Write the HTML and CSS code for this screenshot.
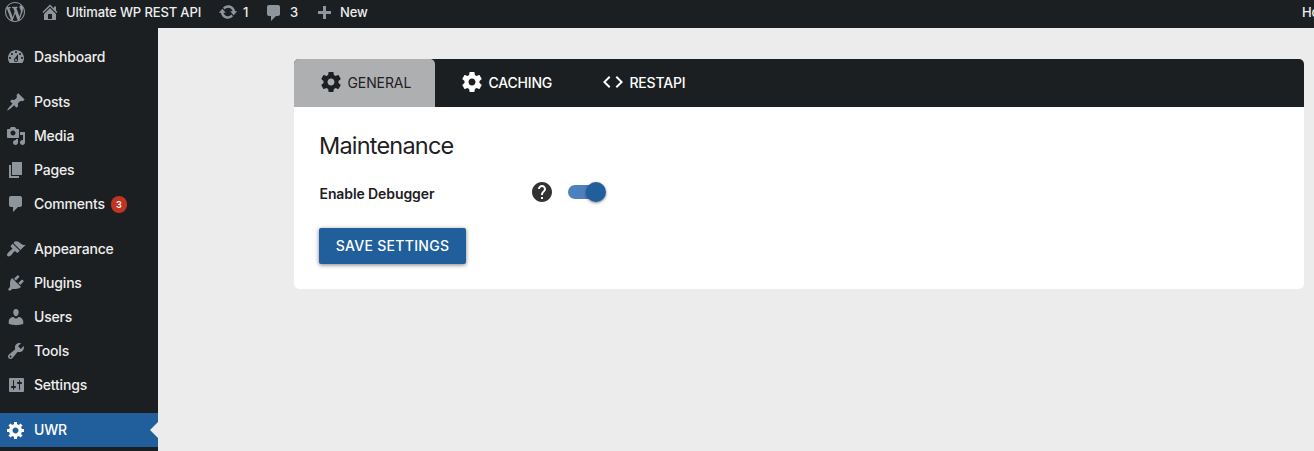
FILE: index.html
```html
<!DOCTYPE html>
<html lang="en">
<head>
<meta charset="utf-8">
<title>Ultimate WP REST API</title>
<link rel="stylesheet" href="styles.css">
</head>
<body>
<header class="adminbar">
  <svg class="icon logo" viewBox="0 0 20 20"><path d="M20 10c0-5.51-4.49-10-10-10C4.48 0 0 4.49 0 10c0 5.52 4.48 10 10 10 5.51 0 10-4.48 10-10zM7.78 15.37L4.37 6.22c.55-.02 1.17-.08 1.17-.08.5-.06.44-1.13-.06-1.11 0 0-1.45.11-2.37.11-.18 0-.37 0-.58-.01C4.12 2.69 6.87 1.11 10 1.11c2.33 0 4.45.87 6.05 2.34-.68-.11-1.65.39-1.65 1.58 0 .74.45 1.36.9 2.1.35.61.55 1.36.55 2.46 0 1.49-1.4 5-1.4 5l-3.03-8.37c.54-.02.82-.17.82-.17.5-.05.44-1.25-.06-1.22 0 0-1.44.12-2.38.12-.87 0-2.33-.12-2.33-.12-.5-.03-.56 1.2-.06 1.22l.92.08 1.26 3.41zM17.41 10c.24-.64.74-1.87.43-4.25.7 1.29 1.05 2.71 1.05 4.25 0 3.29-1.73 6.24-4.4 7.78.97-2.59 1.94-5.2 2.92-7.78zM6.1 18.09C3.12 16.65 1.11 13.53 1.11 10c0-1.3.23-2.48.72-3.59C3.25 10.3 4.67 14.2 6.1 18.09zm4.03-6.63l2.58 6.98c-.86.29-1.76.45-2.71.45-.79 0-1.57-.11-2.29-.33.81-2.38 1.62-4.74 2.42-7.1z"/></svg>
  <div class="bar-item site"><svg class="icon" viewBox="0 0 20 20"><path d="M16 8.5l1.53 1.53-1.06 1.06L10 4.6l-6.47 6.49-1.06-1.06L10 2.5l4 4v-2h2v4zm-6-2.46l6 5.99V18H4v-5.97zM12 17v-5H8v5h4z"/></svg><span>Ultimate WP REST API</span></div>
  <div class="bar-item updates"><svg class="icon" viewBox="0 0 20 20"><path d="M10.2 3.28c3.53 0 6.43 2.61 6.92 6h2.08l-3.5 4-3.5-4h2.32c-.45-1.97-2.21-3.45-4.32-3.45-1.45 0-2.73.71-3.54 1.78L4.95 5.66C6.23 4.2 8.11 3.28 10.2 3.28zm-.4 13.44c-3.52 0-6.43-2.61-6.92-6H.8l3.5-4c1.17 1.33 2.33 2.67 3.5 4H5.48c.45 1.97 2.21 3.45 4.32 3.45 1.45 0 2.73-.71 3.54-1.78l1.71 1.95c-1.28 1.46-3.15 2.38-5.25 2.38z"/></svg><span>1</span></div>
  <div class="bar-item replies"><svg class="icon" viewBox="0 0 20 20"><path d="M5 2h9c1.1 0 2 .9 2 2v7c0 1.1-.9 2-2 2h-2l-5 5v-5H5c-1.1 0-2-.9-2-2V4c0-1.1.9-2 2-2z"/></svg><span>3</span></div>
  <div class="bar-item new"><svg class="icon" viewBox="0 0 20 20"><path d="M17 7v3h-5v5H9v-5H4V7h5V2h3v5h5z"/></svg><span>New</span></div>
  <div class="howdy">Howdy</div>
</header>
<div class="layout">
  <nav class="menu">
    <a class="menu-item"><svg class="icon" viewBox="0 0 20 20"><path d="M3.76 16h12.48c1.1-1.37 1.76-3.11 1.76-5 0-4.42-3.58-8-8-8s-8 3.58-8 8c0 1.89.66 3.63 1.76 5zM10 4c.55 0 1 .45 1 1s-.45 1-1 1-1-.45-1-1 .45-1 1-1zM6 6c.55 0 1 .45 1 1s-.45 1-1 1-1-.45-1-1 .45-1 1-1zm8 0c.55 0 1 .45 1 1s-.45 1-1 1-1-.45-1-1 .45-1 1-1zm-5.37 5.55L12 7v6c0 1.1-.9 2-2 2s-2-.9-2-2c0-.57.24-1.08.63-1.45zM4 10c.55 0 1 .45 1 1s-.45 1-1 1-1-.45-1-1 .45-1 1-1zm12 0c.55 0 1 .45 1 1s-.45 1-1 1-1-.45-1-1 .45-1 1-1zm-5 3c0-.55-.45-1-1-1s-1 .45-1 1 .45 1 1 1 1-.45 1-1z"/></svg><span>Dashboard</span></a>
    <a class="menu-item group"><svg class="icon" viewBox="0 0 20 20"><path d="M10.44 3.02l1.82-1.82 6.36 6.35-1.83 1.82c-1.05-.68-2.48-.57-3.41.36l-.75.75c-.92.93-1.04 2.35-.35 3.41l-1.83 1.82-2.41-2.41-2.8 2.79c-.42.42-3.38 2.71-3.8 2.29s1.86-3.39 2.28-3.81l2.79-2.79L4.1 9.36l1.83-1.82c1.05.69 2.48.57 3.4-.36l.75-.75c.93-.92 1.05-2.35.36-3.41z"/></svg><span>Posts</span></a>
    <a class="menu-item"><svg class="icon" viewBox="0 0 20 20"><path d="M13 11V4c0-.55-.45-1-1-1h-1.67L9 1H5L3.67 3H2c-.55 0-1 .45-1 1v7c0 .55.45 1 1 1h10c.55 0 1-.45 1-1zM7 4.5c1.38 0 2.5 1.12 2.5 2.5S8.38 9.5 7 9.5 4.5 8.38 4.5 7 5.62 4.5 7 4.5zM14 6h5v10.5c0 1.38-1.12 2.5-2.5 2.5S14 17.88 14 16.5s1.12-2.5 2.5-2.5c.17 0 .34.02.5.05V9h-3V6zm-4 8.05V13h2v3.5c0 1.38-1.12 2.5-2.5 2.5S7 17.88 7 16.5 8.12 14 9.5 14c.17 0 .34.02.5.05z"/></svg><span>Media</span></a>
    <a class="menu-item"><svg class="icon" viewBox="0 0 20 20"><path d="M6 15V2h10v13H6zm-1 1h8v2H3V5h2v11z"/></svg><span>Pages</span></a>
    <a class="menu-item"><svg class="icon" viewBox="0 0 20 20"><path d="M5 2h9c1.1 0 2 .9 2 2v7c0 1.1-.9 2-2 2h-2l-5 5v-5H5c-1.1 0-2-.9-2-2V4c0-1.1.9-2 2-2z"/></svg><span>Comments</span><b class="badge">3</b></a>
    <a class="menu-item group"><svg class="icon" viewBox="0 0 20 20"><path d="M14.48 11.06L7.41 3.99l1.5-1.5c.5-.56 2.3-.47 3.51.32 1.21.8 1.43 1.28 2.91 2.1 1.18.64 2.45 1.26 4.45.85zm-.71.71L6.7 4.7 4.93 6.47c-.39.39-.39 1.02 0 1.41l1.06 1.06c.39.39.39 1.03 0 1.42-.6.6-1.43 1.11-2.21 1.69-.35.26-.7.53-1.01.84C1.43 14.23.4 16.08 1.4 17.07c.99 1 2.84-.03 4.18-1.36.31-.31.58-.66.85-1.02.57-.78 1.08-1.61 1.69-2.21.39-.39 1.02-.39 1.41 0l1.06 1.06c.39.39 1.02.39 1.41 0z"/></svg><span>Appearance</span></a>
    <a class="menu-item"><svg class="icon" viewBox="0 0 20 20"><path d="M13.11 4.36L9.87 7.6 8 5.73l3.24-3.24c.35-.34 1.05-.2 1.56.32.52.51.66 1.21.31 1.55zm-8 1.77l.91-1.12 9.01 9.01-1.19.84c-.71.71-2.63 1.16-3.82 1.16H6.14L4.9 17.26c-.59.59-1.54.59-2.12 0-.59-.58-.59-1.53 0-2.12l1.24-1.24v-3.88c0-1.13.4-3.19 1.09-3.89zm7.26 3.97l3.24-3.24c.34-.35 1.04-.21 1.55.31.52.51.66 1.21.31 1.55l-3.24 3.25z"/></svg><span>Plugins</span></a>
    <a class="menu-item"><svg class="icon" viewBox="0 0 20 20"><path d="M10 9.25c-2.27 0-2.73-3.44-2.73-3.44C7 4.02 7.82 2 9.97 2c2.16 0 2.98 2.02 2.71 3.81 0 0-.41 3.44-2.68 3.44zm0 2.57L12.72 10c2.39 0 4.52 2.33 4.52 4.53v2.49s-3.65 1.13-7.24 1.13c-3.65 0-7.24-1.13-7.24-1.13v-2.49c0-2.25 1.94-4.48 4.47-4.48z"/></svg><span>Users</span></a>
    <a class="menu-item"><svg class="icon" viewBox="0 0 20 20"><path d="M16.68 9.77c-1.34 1.34-3.3 1.67-4.95.99l-5.41 6.52c-.99.99-2.59.99-3.58 0s-.99-2.59 0-3.57l6.52-5.42c-.68-1.65-.35-3.61.99-4.95 1.28-1.28 3.12-1.62 4.72-1.06l-2.89 2.89 2.82 2.82 2.86-2.87c.53 1.58.18 3.39-1.08 4.65zM3.81 16.21c.4.39 1.04.39 1.43 0 .4-.4.4-1.04 0-1.43-.39-.4-1.03-.4-1.43 0-.39.39-.39 1.03 0 1.43z"/></svg><span>Tools</span></a>
    <a class="menu-item"><svg class="icon" viewBox="0 0 20 20"><path d="M18 16V4c0-.55-.45-1-1-1H4c-.55 0-1 .45-1 1v12c0 .55.45 1 1 1h13c.55 0 1-.45 1-1zM8 11h1c.55 0 1 .45 1 1s-.45 1-1 1H8v1.5c0 .28-.22.5-.5.5s-.5-.22-.5-.5V13H6c-.55 0-1-.45-1-1s.45-1 1-1h1V5.5c0-.28.22-.5.5-.5s.5.22.5.5V11zm5-2h-1c-.55 0-1-.45-1-1s.45-1 1-1h1V5.5c0-.28.22-.5.5-.5s.5.22.5.5V7h1c.55 0 1 .45 1 1s-.45 1-1 1h-1v5.5c0 .28-.22.5-.5.5s-.5-.22-.5-.5V9z"/></svg><span>Settings</span></a>
    <a class="menu-item group current"><svg class="icon" viewBox="0 0 20 20"><path d="M18 12h-2.18c-.17.7-.44 1.35-.81 1.93l1.54 1.54-2.1 2.1-1.54-1.54c-.58.36-1.23.63-1.91.79V19H8v-2.18c-.68-.16-1.33-.43-1.91-.79l-1.54 1.54-2.12-2.12 1.54-1.54c-.36-.58-.63-1.23-.79-1.91H1V9.03h2.17c.16-.7.44-1.35.8-1.94L2.43 5.55l2.1-2.1 1.54 1.54c.58-.37 1.24-.64 1.93-.81V2h3v2.18c.68.16 1.33.43 1.91.79l1.54-1.54 2.12 2.12-1.54 1.54c.36.59.64 1.24.8 1.94H18V12zm-8.5 1.5c1.66 0 3-1.34 3-3s-1.34-3-3-3-3 1.34-3 3 1.34 3 3 3z"/></svg><span>UWR</span></a>
  </nav>
  <main class="content">
    <section class="panel">
      <div class="tabs">
        <div class="tab active"><svg class="tab-icon" viewBox="0 0 24 24"><path d="M19.43 12.98c.04-.32.07-.64.07-.98s-.03-.66-.07-.98l2.11-1.65c.19-.15.24-.42.12-.64l-2-3.46c-.12-.22-.39-.3-.61-.22l-2.49 1c-.52-.4-1.08-.73-1.69-.98l-.38-2.65C14.46 2.18 14.25 2 14 2h-4c-.25 0-.46.18-.49.42l-.38 2.65c-.61.25-1.17.59-1.69.98l-2.49-1c-.23-.09-.49 0-.61.22l-2 3.46c-.13.22-.07.49.12.64l2.11 1.65c-.04.32-.07.65-.07.98s.03.66.07.98l-2.11 1.65c-.19.15-.24.42-.12.64l2 3.46c.12.22.39.3.61.22l2.49-1c.52.4 1.08.73 1.69.98l.38 2.65c.03.24.24.42.49.42h4c.25 0 .46-.18.49-.42l.38-2.65c.61-.25 1.17-.59 1.69-.98l2.49 1c.23.09.49 0 .61-.22l2-3.46c.12-.22.07-.49-.12-.64l-2.11-1.65zM12 15.5c-1.93 0-3.5-1.57-3.5-3.5s1.57-3.5 3.5-3.5 3.5 1.57 3.5 3.5-1.57 3.5-3.5 3.5z"/></svg><span>GENERAL</span></div>
        <div class="tab"><svg class="tab-icon" viewBox="0 0 24 24"><path d="M19.43 12.98c.04-.32.07-.64.07-.98s-.03-.66-.07-.98l2.11-1.65c.19-.15.24-.42.12-.64l-2-3.46c-.12-.22-.39-.3-.61-.22l-2.49 1c-.52-.4-1.08-.73-1.69-.98l-.38-2.65C14.46 2.18 14.25 2 14 2h-4c-.25 0-.46.18-.49.42l-.38 2.65c-.61.25-1.17.59-1.69.98l-2.49-1c-.23-.09-.49 0-.61.22l-2 3.46c-.13.22-.07.49.12.64l2.11 1.65c-.04.32-.07.65-.07.98s.03.66.07.98l-2.11 1.65c-.19.15-.24.42-.12.64l2 3.46c.12.22.39.3.61.22l2.49-1c.52.4 1.08.73 1.69.98l.38 2.65c.03.24.24.42.49.42h4c.25 0 .46-.18.49-.42l.38-2.65c.61-.25 1.17-.59 1.69-.98l2.49 1c.23.09.49 0 .61-.22l2-3.46c.12-.22.07-.49-.12-.64l-2.11-1.65zM12 15.5c-1.93 0-3.5-1.57-3.5-3.5s1.57-3.5 3.5-3.5 3.5 1.57 3.5 3.5-1.57 3.5-3.5 3.5z"/></svg><span>CACHING</span></div>
        <div class="tab"><svg class="tab-icon" viewBox="0 0 24 24"><path d="M9.4 16.6L4.8 12l4.6-4.6L8 6l-6 6 6 6 1.4-1.4zm5.2 0l4.6-4.6-4.6-4.6L16 6l6 6-6 6-1.4-1.4z"/></svg><span>RESTAPI</span></div>
      </div>
      <div class="panel-body">
        <h2 class="title">Maintenance</h2>
        <div class="field">
          <label class="field-label">Enable Debugger</label>
          <svg class="help" viewBox="0 0 24 24"><path d="M12 2C6.48 2 2 6.48 2 12s4.48 10 10 10 10-4.48 10-10S17.52 2 12 2zm1 17h-2v-2h2v2zm2.07-7.75l-.9.92C13.45 12.9 13 13.5 13 15h-2v-.5c0-1.1.45-2.1 1.17-2.83l1.24-1.26c.37-.36.59-.86.59-1.41 0-1.1-.9-2-2-2s-2 .9-2 2H8c0-2.21 1.79-4 4-4s4 1.79 4 4c0 .88-.36 1.68-.93 2.25z"/></svg>
          <div class="switch"><div class="thumb"></div></div>
        </div>
        <button class="save">SAVE SETTINGS</button>
      </div>
    </section>
  </main>
</div>
</body>
</html>
```

FILE: styles.css
```css
* { box-sizing: border-box; }
body {
  margin: 0;
  height: 451px;
  overflow: hidden;
  background: #ececec;
  color: #1d2023;
  font-family: Inter, "Liberation Sans", sans-serif;
}
.icon { width: 20px; height: 20px; fill: #8f959d; flex: none; display: block; }

/* Top bar */
.adminbar {
  display: flex;
  height: 28px;
  padding: 2px 0 0 5px;
  background: #1c1f21;
  color: #eee;
  font-size: 13px;
  font-weight: 550;
  line-height: 20px;
  letter-spacing: -.13px;
  white-space: nowrap;
}
.bar-item { display: flex; flex: none; gap: 6px; }
.site { width: 178px; margin-left: 15px; }
.updates { width: 46px; gap: 5px; }
.replies { width: 50px; gap: 6px; }
.new .icon { margin-top: 2px; }
.replies .icon { margin-top: 1px; }
.howdy { flex: none; margin-left: auto; width: 12px; overflow: hidden; }

.layout { display: flex; height: 423px; }

/* Side menu */
.menu {
  width: 158px;
  flex: none;
  padding-top: 12px;
  background: #1c1f21;
  color: #eee;
  font-size: 14px;
  font-weight: 550;
  letter-spacing: -.2px;
}
.menu-item {
  position: relative;
  display: flex;
  align-items: center;
  height: 34px;
  padding-left: 6px;
  gap: 8px;
}
.menu-item span { padding-bottom: 2px; }
.group { margin-top: 11px; }
.current { background: #215f9c; color: #fff; }
.current .icon { fill: #fff; }
.current::after {
  content: "";
  position: absolute;
  right: 0;
  top: 9px;
  border: 8px solid transparent;
  border-left: 0;
  border-right-color: #ececec;
}
.badge {
  display: flex;
  align-items: center;
  justify-content: center;
  width: 16px;
  height: 17px;
  margin-left: -2px;
  border-radius: 9px;
  background: #c03522;
  color: #fff;
  font-size: 9px;
  font-weight: 600;
}

/* Settings panel */
.content { flex: 1; padding: 31px 10px 0 136px; }
.panel { height: 230px; border-radius: 5px; background: #fff; overflow: hidden; }
.tabs { display: flex; height: 48px; background: #1c1f21; }
.tab {
  display: flex;
  align-items: center;
  width: 141px;
  padding-left: 24.5px;
  gap: 5px;
  color: #fff;
  font-size: 14px;
  font-weight: 550;
  letter-spacing: -.2px;
}
.tab span { padding-bottom: 1px; }
.tab.active { background: #aeafb1; color: #1d2023; font-weight: 400; letter-spacing: -.1px; border-radius: 0 5px 0 0; }
.tab-icon { width: 24px; height: 24px; margin-top: -2px; fill: currentColor; flex: none; }
.panel-body { padding: 23px 25px; }
.title { margin: 0; font-size: 23.5px; font-weight: 400; line-height: 32px; letter-spacing: -.8px; }
.field { display: flex; align-items: center; height: 24px; margin-top: 18px; }
.field-label { width: 210.5px; padding: 3px 0 0 .5px; font-size: 14px; font-weight: 600; letter-spacing: -.1px; }
.help { width: 24px; height: 24px; fill: #333; }
.switch {
  position: relative;
  width: 34px;
  height: 14px;
  margin-left: 14.5px;
  border-radius: 7px;
  background: #4d81bd;
}
.thumb {
  position: absolute;
  right: -4px;
  top: -3px;
  width: 20px;
  height: 20px;
  border-radius: 50%;
  background: #215f9c;
  box-shadow: 0 1px 3px rgba(0, 0, 0, .5);
}
.save {
  display: block;
  width: 147px;
  height: 36px;
  margin-top: 24px;
  padding: 0 0 1px;
  border: 0;
  border-radius: 2px;
  background: #215f9c;
  color: #fff;
  font: 550 14px Inter, "Liberation Sans", sans-serif;
  letter-spacing: .3px;
  box-shadow: 0 1px 4px rgba(0, 0, 0, .5);
}
```
